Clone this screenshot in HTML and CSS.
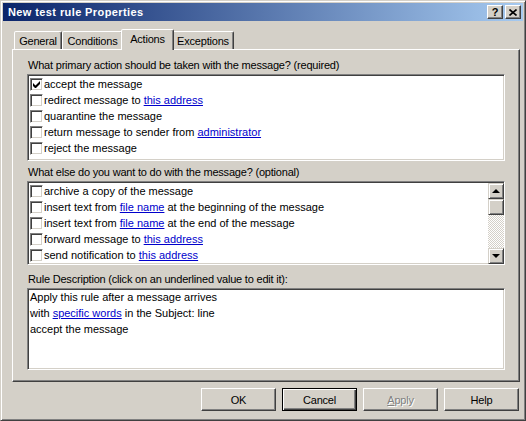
FILE: index.html
```html
<!DOCTYPE html>
<html>

<head>
    <link rel="stylesheet" href="styles.css">
</head>

<body>
    <div class="window">
        <div class="titlebar">
            <span class="title">New test rule Properties</span>
            <span class="caption-btn help">?</span>
            <span class="caption-btn">
                <svg width="8" height="7" viewBox="0 0 8 7"><path d="M0.5 0.5 L7.5 6.5 M7.5 0.5 L0.5 6.5" stroke="#000" stroke-width="1.6"/></svg>
            </span>
        </div>

        <div class="dialog">
            <div class="tabs">
                <div class="tab" style="width:48px">General</div>
                <div class="tab" style="width:61px">Conditions</div>
                <div class="tab selected" style="width:53px">Actions</div>
                <div class="tab" style="width:62px">Exceptions</div>
            </div>

            <div class="panel">
                <div class="label">What primary action should be taken with the message? (required)</div>
                <div class="listbox primary">
                    <div class="row"><span class="check"><svg width="7" height="7" viewBox="0 0 7 7"><path d="M0 2 L2.5 4.5 L7 0 L7 3 L2.5 7.5 L0 5 Z" fill="#000"/></svg></span><span class="text">accept the message</span></div>
                    <div class="row"><span class="check"></span><span class="text">redirect message to <a href="#">this address</a></span></div>
                    <div class="row"><span class="check"></span><span class="text">quarantine the message</span></div>
                    <div class="row"><span class="check"></span><span class="text">return message to sender from <a href="#">administrator</a></span></div>
                    <div class="row"><span class="check"></span><span class="text">reject the message</span></div>
                </div>

                <div class="label second">What else do you want to do with the message? (optional)</div>
                <div class="listbox optional">
                    <div class="items">
                        <div class="row"><span class="check"></span><span class="text">archive a copy of the message</span></div>
                        <div class="row"><span class="check"></span><span class="text">insert text from <a href="#">file name</a> at the beginning of the message</span></div>
                        <div class="row"><span class="check"></span><span class="text">insert text from <a href="#">file name</a> at the end of the message</span></div>
                        <div class="row"><span class="check"></span><span class="text">forward message to <a href="#">this address</a></span></div>
                        <div class="row"><span class="check"></span><span class="text">send notification to <a href="#">this address</a></span></div>
                    </div>
                    <div class="scrollbar">
                        <div class="sb-btn"><span class="arrow-up"></span></div>
                        <div class="sb-btn"></div>
                        <div class="sb-track"></div>
                        <div class="sb-btn"><span class="arrow-down"></span></div>
                    </div>
                </div>

                <div class="label third">Rule Description (click on an underlined value to edit it):</div>
                <div class="listbox description">
                    <div class="line">Apply this rule after a message arrives</div>
                    <div class="line">with <a href="#">specific words</a> in the Subject: line</div>
                    <div class="line">accept the message</div>
                </div>
            </div>

            <div class="buttons">
                <div class="btn">OK</div>
                <div class="btn default">Cancel</div>
                <div class="btn disabled"><span><u>A</u>pply</span></div>
                <div class="btn">Help</div>
            </div>
        </div>
    </div>
</body>

</html>
```

FILE: styles.css
```css
body {
    margin: 0;
    font-family: "Liberation Sans", Arial, sans-serif;
    font-size: 11px;
    color: #000000;
}

.window {
    width: 526px;
    height: 421px;
    box-sizing: border-box;
    background-color: #d4d0c8;
    border: 1px solid;
    border-color: #d4d0c8 #404040 #404040 #d4d0c8;
    box-shadow: inset 1px 1px #ffffff, inset -1px -1px #808080;
    padding: 2px;
}

.titlebar {
    height: 18px;
    display: flex;
    align-items: center;
    background: linear-gradient(to right, #0a246a, #a6caf0);
    color: #ffffff;
    font-weight: bold;
    padding: 0 2px 0 5px;
}

.title {
    flex: 1;
    letter-spacing: 0.4px;
}

.caption-btn {
    width: 16px;
    height: 14px;
    box-sizing: border-box;
    background-color: #d4d0c8;
    border: 1px solid;
    border-color: #ffffff #404040 #404040 #ffffff;
    box-shadow: inset -1px -1px #808080;
    display: flex;
    align-items: center;
    justify-content: center;
    color: #000000;
    font-size: 11px;
    margin-left: 2px;
}

.dialog {
    padding: 8px 3px 0 9px;
}

.tabs {
    display: flex;
    align-items: flex-end;
    height: 20px;
    padding-left: 2px;
    position: relative;
    z-index: 1;
}

.tab {
    height: 18px;
    box-sizing: border-box;
    background-color: #d4d0c8;
    border: 1px solid;
    border-bottom: none;
    border-color: #ffffff #404040 transparent #ffffff;
    box-shadow: inset -1px 0 #808080;
    border-radius: 2px 2px 0 0;
    display: flex;
    align-items: center;
    justify-content: center;
    letter-spacing: -0.2px;
}

.tab.selected {
    height: 21px;
    margin: 0 -2px -1px -2px;
    padding-bottom: 3px;
    position: relative;
}

.panel {
    height: 333px;
    box-sizing: border-box;
    border: 1px solid;
    border-color: #ffffff #404040 #404040 #ffffff;
    box-shadow: inset -1px -1px #808080;
    padding: 8px 14px 0 14px;
}

.label {
    height: 14px;
    line-height: 14px;
    padding-left: 1px;
    margin-bottom: 2px;
    letter-spacing: -0.2px;
}

.label.second {
    margin-top: 4px;
}

.label.third {
    margin-top: 7px;
}

.listbox {
    box-sizing: border-box;
    background-color: #ffffff;
    border: 1px solid;
    border-color: #808080 #ffffff #ffffff #808080;
    box-shadow: inset 1px 1px #404040, inset -1px -1px #d4d0c8;
    padding: 1px 2px 2px 2px;
    overflow: hidden;
}

.listbox.primary {
    height: 87px;
}

.listbox.optional {
    height: 84px;
    display: flex;
    padding: 1px 0 0 2px;
}

.listbox.description {
    height: 82px;
    padding: 0 2px;
}

.items {
    flex: 1;
    overflow: hidden;
}

.row {
    height: 16px;
    display: flex;
    align-items: center;
    white-space: nowrap;
}

.check {
    width: 13px;
    height: 13px;
    box-sizing: border-box;
    margin-right: 1px;
    background-color: #ffffff;
    border: 1px solid;
    border-color: #808080 #ffffff #ffffff #808080;
    box-shadow: inset 1px 1px #404040, inset -1px -1px #d4d0c8;
    display: flex;
    align-items: center;
    justify-content: center;
}

a {
    color: #0000cc;
    text-decoration: underline;
}

.line {
    height: 16px;
    line-height: 16px;
    white-space: nowrap;
}

.scrollbar {
    width: 16px;
    display: flex;
    flex-direction: column;
}

.sb-btn {
    width: 16px;
    height: 16px;
    box-sizing: border-box;
    background-color: #d4d0c8;
    border: 1px solid;
    border-color: #d4d0c8 #404040 #404040 #d4d0c8;
    box-shadow: inset 1px 1px #ffffff, inset -1px -1px #808080;
    display: flex;
    align-items: center;
    justify-content: center;
}

.sb-track {
    flex: 1;
    background: repeating-conic-gradient(#d4d0c8 0 25%, #ffffff 0 50%) 0 0 / 2px 2px;
}

.arrow-up {
    width: 0;
    height: 0;
    border-left: 4px solid transparent;
    border-right: 4px solid transparent;
    border-bottom: 4px solid #000000;
}

.arrow-down {
    width: 0;
    height: 0;
    border-left: 4px solid transparent;
    border-right: 4px solid transparent;
    border-top: 4px solid #000000;
}

.buttons {
    display: flex;
    justify-content: flex-end;
    gap: 6px;
    margin: 6px 1px 0 0;
}

.btn {
    width: 75px;
    height: 23px;
    box-sizing: border-box;
    border: 1px solid;
    border-color: #ffffff #404040 #404040 #ffffff;
    box-shadow: inset -1px -1px #808080;
    display: flex;
    align-items: center;
    justify-content: center;
    letter-spacing: -0.2px;
}

.btn.default {
    border-color: #000000;
    box-shadow: inset 1px 1px #ffffff, inset -1px -1px #404040, inset -2px -2px #808080;
}

.btn.disabled {
    color: #808080;
    text-shadow: 1px 1px #ffffff;
}
```
